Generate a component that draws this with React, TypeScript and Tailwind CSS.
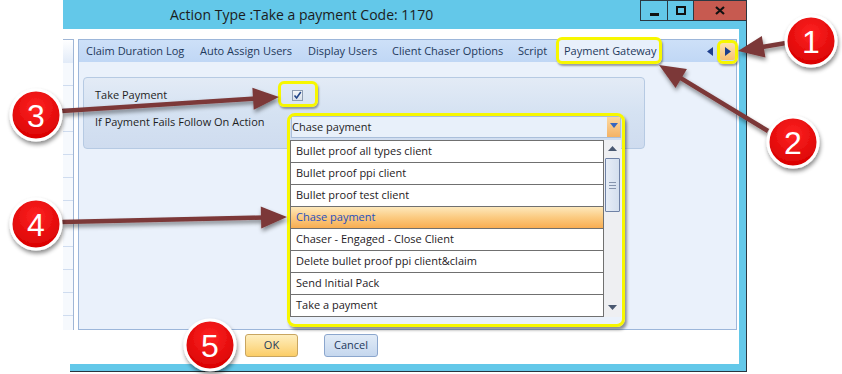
import React from "react";

const tabs = [
  { label: "Claim Duration Log", w: "w-[114px]" },
  { label: "Auto Assign Users", w: "w-[108px]" },
  { label: "Display Users", w: "w-[84px]" },
  { label: "Client Chaser Options", w: "w-[126px]" },
  { label: "Script", w: "w-[39px]" },
];

const options = [
  "Bullet proof all types client",
  "Bullet proof ppi client",
  "Bullet proof test client",
  "Chase payment",
  "Chaser - Engaged - Close Client",
  "Delete bullet proof ppi client&claim",
  "Send Initial Pack",
  "Take a payment",
];

const selected = "Chase payment";

const callouts = [
  { n: "1", x: 811, y: 41 },
  { n: "2", x: 793, y: 142 },
  { n: "3", x: 36, y: 115 },
  { n: "4", x: 36, y: 224 },
  { n: "5", x: 210, y: 345 },
];

const arrows = [
  [786, 43, 738, 51],
  [768, 131, 659, 65],
  [62, 111, 279, 97],
  [62, 222, 287, 217],
];

function arrowShape(x1: number, y1: number, x2: number, y2: number) {
  const dx = x2 - x1;
  const dy = y2 - y1;
  const len = Math.hypot(dx, dy);
  const ux = dx / len;
  const uy = dy / len;
  const L = 26;
  const W = 11;
  const bx = x2 - ux * L;
  const by = y2 - uy * L;
  return {
    line: [x1, y1, bx + ux * 3, by + uy * 3],
    head: `${x2},${y2} ${bx - uy * W},${by + ux * W} ${bx + uy * W},${by - ux * W}`,
  };
}

const TitleBar = () => (
  <div className="flex h-[29px] shrink-0 bg-[#63c8e9]">
    <div className="flex flex-1 items-center pl-[107px] text-[14px] text-[#1c1c1c]">
      Action Type :Take a payment Code: 1170
    </div>
    <div className="flex h-[21px] self-start">
      <div className="flex w-[28px] items-end justify-center border border-[#2b3842] pb-[4px]">
        <div className="h-[3px] w-[9px] bg-[#111]" />
      </div>
      <div className="flex w-[26px] items-center justify-center border-y border-r border-[#2b3842]">
        <div className="h-[9px] w-[10px] border-2 border-[#111]" />
      </div>
      <div className="flex w-[52px] items-center justify-center border-y border-[#2b3842] bg-[#c75a50]">
        <svg width="10" height="9" viewBox="0 0 10 9">
          <path d="M1 1 L9 8 M9 1 L1 8" stroke="#111" strokeWidth="2.2" />
        </svg>
      </div>
    </div>
  </div>
);

const LeftPanel = () => (
  <div className="flex w-[11px] shrink-0 flex-col border-r border-t border-[#9fb6d6] bg-[#f6f9fd]">
    <div className="h-[23px] shrink-0 bg-gradient-to-b from-white to-[#e2ebf8]" />
    {Array.from({ length: 11 }).map((_, i) => (
      <div key={i} className="h-[23px] shrink-0 border-b border-[#cfdcef]" />
    ))}
  </div>
);

const TabStrip = () => (
  <div className="flex h-[22px] shrink-0 items-stretch bg-gradient-to-b from-[#cde0f8] to-[#c0d7f5] pl-[7px] text-[11px] text-[#1e395b]">
    {tabs.map((t) => (
      <div key={t.label} className={`flex items-center whitespace-nowrap ${t.w}`}>
        {t.label}
      </div>
    ))}
    <div className="flex w-[104px] items-center whitespace-nowrap bg-[#e8f0fb] pl-[7px]">
      Payment Gateway
    </div>
    <div className="ml-auto flex items-center pr-[1px]">
      <svg width="6" height="9" viewBox="0 0 6 9" className="mr-[7px]">
        <path d="M6 0 L0 4.5 L6 9 Z" fill="#1d3e8c" />
      </svg>
      <div className="flex h-[18px] w-[15px] items-center justify-center rounded-[2px] bg-gradient-to-b from-[#fde4b0] to-[#f7c073]">
        <svg width="6" height="9" viewBox="0 0 6 9">
          <path d="M0 0 L6 4.5 L0 9 Z" fill="#1d3e8c" />
        </svg>
      </div>
    </div>
  </div>
);

const Dropdown = () => (
  <div className="absolute left-[-2px] top-[23px] flex w-[331px] bg-white text-[11px]">
    <div className="w-[314px] border-x border-t border-[#707070]">
      {options.map((o) => (
        <div
          key={o}
          className={`flex h-[22px] items-center border-b border-[#707070] pl-[5px] whitespace-nowrap ${
            o === selected
              ? "bg-[linear-gradient(to_bottom,#fde8bb,#fbca80_50%,#f8ad52)] text-[#1f4fbf]"
              : "text-[#1e1a24]"
          }`}
        >
          {o}
        </div>
      ))}
    </div>
    <div className="flex w-[17px] flex-col items-center bg-[#eeeff2]">
      <svg width="9" height="5" viewBox="0 0 9 5" className="mt-[6px]">
        <path d="M0 5 L4.5 0 L9 5 Z" fill="#4a5870" />
      </svg>
      <div className="mt-[7px] flex h-[54px] w-[15px] flex-col items-center justify-center gap-[2px] rounded-[1px] border border-[#6f82a6] bg-gradient-to-r from-[#e6edf7] to-[#d4dfee]">
        <div className="h-px w-[7px] bg-[#8594ad]" />
        <div className="h-px w-[7px] bg-[#8594ad]" />
        <div className="h-px w-[7px] bg-[#8594ad]" />
      </div>
      <svg width="9" height="5" viewBox="0 0 9 5" className="mt-auto mb-[7px]">
        <path d="M0 0 L4.5 5 L9 0 Z" fill="#4a5870" />
      </svg>
    </div>
  </div>
);

const GroupBox = () => (
  <div className="h-[72px] w-[562px] rounded-[4px] border border-[#b6cae3] bg-gradient-to-b from-[#e3ebf6] via-[#d5e2f2] to-[#cfdcef] pl-[11px] pt-[7px] text-[11px] text-[#1e1e1e]">
    <div className="flex h-[21px] items-center">
      <div className="w-[196px]">Take Payment</div>
      <div className="ml-[1px] flex h-[11px] w-[11px] items-center justify-center border border-[#8e9db3] bg-gradient-to-b from-[#f4f6f9] to-[#d9e0ea]">
        <svg width="9" height="9" viewBox="0 0 9 9">
          <path d="M1.5 4.5 L3.6 7 L7.8 1" stroke="#22468a" strokeWidth="1.6" fill="none" />
        </svg>
      </div>
    </div>
    <div className="mt-[10px] flex items-start">
      <div className="mt-[-1px] w-[196px] leading-[14px]">If Payment Fails Follow On Action</div>
      <div className="relative flex h-[22px] w-[330px] items-center border border-[#aabfdb] bg-[#e8f0fa]">
        <div className="flex-1 text-[#1e1e1e]">Chase payment</div>
        <div className="flex h-full w-[13px] items-start justify-center bg-gradient-to-b from-[#fcd9a0] to-[#f4b264] pt-[6px]">
          <svg width="8" height="5" viewBox="0 0 8 5">
            <path d="M0 0 L4 5 L8 0 Z" fill="#3566c0" />
          </svg>
        </div>
        <Dropdown />
      </div>
    </div>
  </div>
);

const MainPanel = () => (
  <div className="ml-[4px] flex w-[659px] flex-col border border-[#9cb6da]">
    <TabStrip />
    <div className="flex-1 bg-[#eaf1fb] pl-[4px] pt-[15px]">
      <GroupBox />
    </div>
  </div>
);

const Footer = () => (
  <div className="flex h-[34px] items-start pl-[182px] pt-[4px] text-[11px]">
    <button className="flex h-[23px] w-[53px] items-center justify-center rounded-[3px] border border-[#c8a560] bg-gradient-to-b from-[#feeebd] to-[#fbcd66] text-[#1e395b]">
      OK
    </button>
    <button className="ml-[26px] flex h-[23px] w-[54px] items-center justify-center rounded-[3px] border border-[#8ba6cd] bg-gradient-to-b from-[#e1ebf7] to-[#c5d7ee] text-[#1e395b]">
      Cancel
    </button>
  </div>
);

const Annotations = () => (
  <>
    <div className="pointer-events-none absolute left-[717px] top-[40px] h-[24px] w-[21px] rounded-[6px] border-[3px] border-[#f7f700] shadow-[1px_2px_2px_rgba(0,0,0,0.35)]" />
    <div className="pointer-events-none absolute left-[556px] top-[37px] h-[27px] w-[106px] rounded-[6px] border-[3px] border-[#f7f700] shadow-[1px_2px_2px_rgba(0,0,0,0.35)]" />
    <div className="pointer-events-none absolute left-[278px] top-[81px] h-[26px] w-[40px] rounded-[6px] border-[3px] border-[#f7f700] shadow-[1px_2px_2px_rgba(0,0,0,0.35)]" />
    <div className="pointer-events-none absolute left-[287px] top-[113px] h-[214px] w-[338px] rounded-[8px] border-[3px] border-[#f7f700] shadow-[2px_3px_3px_rgba(0,0,0,0.4)]" />
    <svg className="pointer-events-none absolute left-0 top-0" width="842" height="374" viewBox="0 0 842 374">
      <defs>
        <filter id="sh" x="-30%" y="-30%" width="160%" height="170%">
          <feDropShadow dx="1" dy="3" stdDeviation="2" floodColor="#000" floodOpacity="0.45" />
        </filter>
        <radialGradient id="red" cx="50%" cy="35%" r="65%">
          <stop offset="0%" stopColor="#ff2424" />
          <stop offset="100%" stopColor="#d80000" />
        </radialGradient>
      </defs>
      <g filter="url(#sh)">
        {arrows.map(([x1, y1, x2, y2], i) => {
          const a = arrowShape(x1, y1, x2, y2);
          return (
            <g key={i}>
              <line x1={a.line[0]} y1={a.line[1]} x2={a.line[2]} y2={a.line[3]} stroke="#7b3838" strokeWidth="4.5" />
              <polygon points={a.head} fill="#7b3838" />
            </g>
          );
        })}
      </g>
      {callouts.map((c) => (
        <g key={c.n}>
          <circle cx={c.x} cy={c.y} r="25" fill="url(#red)" stroke="#fff" strokeWidth="3" filter="url(#sh)" />
          <text
            x={c.x}
            y={c.y + 1}
            textAnchor="middle"
            dominantBaseline="central"
            fill="#fff"
            fontSize="32"
            fontFamily="'Liberation Sans', Arial, sans-serif"
          >
            {c.n}
          </text>
        </g>
      ))}
    </svg>
  </>
);

export default function App() {
  return (
    <div className="relative h-[374px] w-[842px] overflow-hidden bg-white font-['Open_Sans',sans-serif]">
      <div className="ml-[63px] flex h-[372px] w-[684px] flex-col border-r border-[#2a3640]">
        <TitleBar />
        <div className="flex h-[335px] flex-col border-r-[7px] border-[#63c8e9] bg-white">
          <div className="flex h-[301px] pt-[10px]">
            <LeftPanel />
            <MainPanel />
          </div>
          <Footer />
        </div>
        <div className="ml-[7px] h-[8px] shrink-0 border-b border-[#2a3640] bg-[#63c8e9]" />
      </div>
      <Annotations />
    </div>
  );
}
